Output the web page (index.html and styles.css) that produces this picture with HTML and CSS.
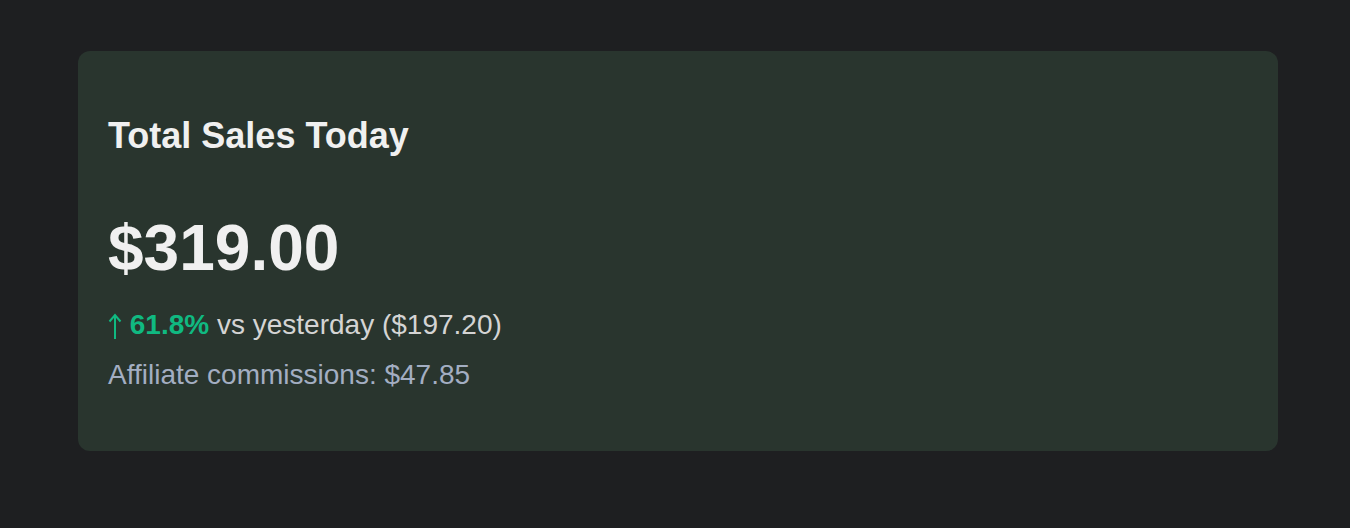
FILE: index.html
```html
<!DOCTYPE html>
<html lang="en">
<head>
<meta charset="utf-8">
<title>Total Sales Today</title>
<link rel="stylesheet" href="styles.css">
</head>
<body>
<section class="card">
  <h2 class="card-title">Total Sales Today</h2>
  <div class="amount">$319.00</div>
  <p class="change"><span class="up"><svg class="arrow" width="14" height="28" viewBox="0 0 14 28" aria-hidden="true"><path d="M7 27V3M1.5 9.5L7 3l5.5 6.5" fill="none" stroke="currentColor" stroke-width="2" stroke-linecap="butt" stroke-linejoin="miter"/></svg> <strong>61.8%</strong></span> vs yesterday ($197.20)</p>
  <p class="affiliate">Affiliate commissions: $47.85</p>
</section>
</body>
</html>
```
FILE: styles.css
```css
html, body {
  margin: 0;
  padding: 0;
  background: #1e1f21;
  font-family: "Liberation Sans", Arial, Helvetica, sans-serif;
}
body {
  padding: 51px 0 0 78px;
}
.card {
  box-sizing: border-box;
  width: 1200px;
  height: 400px;
  background: #29352e;
  border-radius: 12px;
  padding: 65px 30px 30px;
  display: flex;
  flex-direction: column;
}
.card-title {
  margin: 0;
  font-size: 36px;
  line-height: 40px;
  font-weight: 700;
  color: #f0f0f0;
}
.amount {
  margin-top: 56px;
  font-size: 64px;
  line-height: 72px;
  font-weight: 700;
  color: #f0f0f0;
}
.change {
  margin: 25px 0 0;
  font-size: 28px;
  line-height: 31px;
  color: #d4d4d4;
}
.up {
  color: #10b981;
}
.arrow {
  display: inline-block;
  vertical-align: -6px;
}
.up strong {
  font-weight: 700;
}
.affiliate {
  margin: 19px 0 0;
  font-size: 28px;
  line-height: 31px;
  color: #a3aec2;
}
```
